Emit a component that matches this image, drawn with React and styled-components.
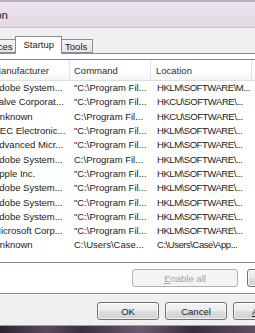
import React from "react";
import styled, { createGlobalStyle } from "styled-components";

const GlobalStyle = createGlobalStyle`
  html, body {
    margin: 0;
    padding: 0;
    overflow: hidden;
  }
  body {
    width: 255px;
    height: 333px;
    background: #3a2f3d;
  }
`;

const Window = styled.div`
  width: 255px;
  height: 333px;
  overflow: hidden;
  display: flex;
  flex-direction: column;
  background: #f0f0f0;
  font-family: "Liberation Sans", Arial, sans-serif;
  font-size: 9.5px;
  color: #1b1b1b;
`;

// lavender caption, only the tail of the title fits in the crop
const TitleBar = styled.div`
  flex: none;
  height: 25px;
  border-top: 2px solid #b9adbf;
  border-bottom: 1px solid #cbc2cf;
  background: linear-gradient(#ebe3ee, #e2d8e6);
  display: flex;
  align-items: center;
`;

// text overflows to the left out of the view
const TitleAnchor = styled.div`
  width: 8px;
  display: flex;
  justify-content: flex-end;
  white-space: nowrap;
  font-size: 11.5px;
  color: #1e1e1e;
`;

const TabStrip = styled.div`
  flex: none;
  display: flex;
  align-items: flex-end;
  height: 17px;
  margin: 8px 0 0 -30px;
  position: relative;
  z-index: 1;
`;

const Tab = styled.div`
  box-sizing: border-box;
  height: ${p => (p.active ? 18 : 14)}px;
  padding: 0 ${p => (p.active ? 7 : p.tight ? 3 : 5)}px ${p => (p.active ? 2 : 0)}px
    ${p => (p.active ? 7 : 5)}px;
  margin: 0 ${p => (p.active ? -2 : 0)}px ${p => (p.active ? -1 : 0)}px;
  border: 1px solid #898c95;
  border-bottom: ${p => (p.active ? "none" : "1px solid #898c95")};
  background: ${p => (p.active ? "#fff" : "linear-gradient(#f3f3f3, #e4e4e4)")};
  display: flex;
  align-items: center;
  white-space: nowrap;
  position: relative;
  z-index: ${p => (p.active ? 2 : 0)};
  & + & {
    margin-left: ${p => (p.active ? -2 : -1)}px;
  }
`;

const Panel = styled.div`
  flex: none;
  box-sizing: border-box;
  height: 241px;
  margin: 0 -60px 0 -20px;
  border: 1px solid #898c95;
  background: #fff;
  padding: 5px 6px 0;
  display: flex;
  flex-direction: column;
`;

const ListView = styled.div`
  box-sizing: border-box;
  height: 204px;
  border: 1px solid #828790;
  overflow: hidden;
`;

const columns = "82px 81px 101px 1fr";

const HeaderRow = styled.div`
  display: grid;
  grid-template-columns: ${columns};
  height: 20px;
  border-bottom: 1px solid #dcdfe3;
  background: linear-gradient(#ffffff 60%, #f4f5f6);
`;

const HeaderCell = styled.div`
  display: flex;
  align-items: center;
  padding-left: ${p => p.pad}px;
  border-right: 1px solid #e1e3e6;
  color: #2e2e2e;
  white-space: nowrap;
  overflow: hidden;
`;

const Row = styled.div`
  display: grid;
  grid-template-columns: ${columns};
  height: 14.3px;
  align-items: center;
`;

const Cell = styled.div`
  padding-left: ${p => p.pad}px;
  letter-spacing: ${p => p.squeeze || 0}px;
  white-space: nowrap;
  overflow: hidden;
  line-height: 14px;
`;

const PanelButtons = styled.div`
  display: flex;
  gap: 9px;
  padding: 6px 0 0 145px;
`;

const Button = styled.button`
  flex: none;
  box-sizing: border-box;
  width: ${p => p.w}px;
  height: 18px;
  padding: 0;
  border: 1px solid #707070;
  border-radius: 3px;
  background: linear-gradient(#f3f3f3 0%, #ebebeb 48%, #dddddd 52%, #cfcfcf 100%);
  box-shadow: inset 0 0 0 1px rgba(255, 255, 255, 0.7);
  font-family: "Liberation Sans", Arial, sans-serif;
  font-size: 9.5px;
  color: #1b1b1b;
  &:disabled {
    border-color: #adb2b5;
    background: #f4f4f4;
    box-shadow: none;
    color: #a3a3a3;
  }
`;

const Footer = styled.div`
  flex: 1;
  display: flex;
  gap: 6px;
  padding: 8px 0 0 97px;
  border-bottom: 1px solid #a79ca9;
`;

// strip of desktop below the dialog
const Desktop = styled.div`
  flex: none;
  height: 7px;
  background: linear-gradient(90deg, #2b2230 0%, #5c4862 18%, #3b2e40 32%, #6d5873 55%, #3a2d3f 75%, #5e4b64 100%);
`;

const rows = [
  ["Adobe System...", "\"C:\\Program Fil...", "HKLM\\SOFTWARE\\M..."],
  ["Valve Corporat...", "\"C:\\Program Fil...", "HKCU\\SOFTWARE\\..."],
  ["Unknown", "C:\\Program Fil...", "HKCU\\SOFTWARE\\..."],
  ["NEC Electronic...", "\"C:\\Program Fil...", "HKLM\\SOFTWARE\\..."],
  ["Advanced Micr...", "\"C:\\Program Fil...", "HKLM\\SOFTWARE\\..."],
  ["Adobe System...", "C:\\Program Fil...", "HKLM\\SOFTWARE\\..."],
  ["Apple Inc.", "\"C:\\Program Fil...", "HKLM\\SOFTWARE\\..."],
  ["Adobe System...", "\"C:\\Program Fil...", "HKLM\\SOFTWARE\\..."],
  ["Adobe System...", "\"C:\\Program Fil...", "HKLM\\SOFTWARE\\..."],
  ["Adobe System...", "\"C:\\Program Fil...", "HKLM\\SOFTWARE\\..."],
  ["Microsoft Corp...", "\"C:\\Program Fil...", "HKLM\\SOFTWARE\\..."],
  ["Unknown", "C:\\Users\\Case...", "C:\\Users\\Case\\App..."],
];

const App = () => {
  return (
    <Window>
      <GlobalStyle />
      <TitleBar>
        <TitleAnchor>System Configuration</TitleAnchor>
      </TitleBar>

      <TabStrip>
        <Tab tight>Services</Tab>
        <Tab active>Startup</Tab>
        <Tab>Tools</Tab>
      </TabStrip>

      <Panel>
        <ListView>
          <HeaderRow>
            <HeaderCell pad={5}>Manufacturer</HeaderCell>
            <HeaderCell pad={4}>Command</HeaderCell>
            <HeaderCell pad={5}>Location</HeaderCell>
            <HeaderCell pad={5}>Date Disabled</HeaderCell>
          </HeaderRow>
          {rows.map((r, i) => (
            <Row key={i}>
              <Cell pad={5}>{r[0]}</Cell>
              <Cell pad={4}>{r[1]}</Cell>
              <Cell pad={6} squeeze={-0.45}>{r[2]}</Cell>
              <Cell pad={5} />
            </Row>
          ))}
        </ListView>
        <PanelButtons>
          <Button w={106} disabled>
            <u>E</u>nable all
          </Button>
          <Button w={106}>
            <u>D</u>isable all
          </Button>
        </PanelButtons>
      </Panel>

      <Footer>
        <Button w={62}>OK</Button>
        <Button w={62}>Cancel</Button>
        <Button w={62}>
          <u>A</u>pply
        </Button>
      </Footer>
      <Desktop />
    </Window>
  );
};

export default App;
